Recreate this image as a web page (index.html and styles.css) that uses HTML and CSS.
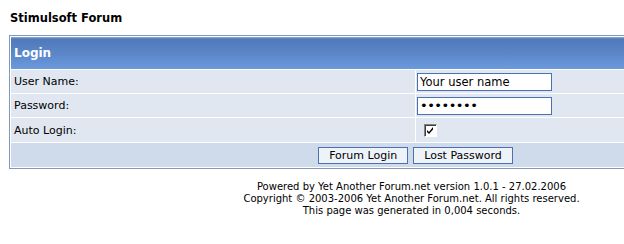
FILE: index.html
```html
<!DOCTYPE html>
<html lang="en">
  <head>
    <meta charset="UTF-8" />
    <title>Stimulsoft Forum - Login</title>
    <link rel="stylesheet" href="styles.css">
  </head>
  <body>
    <div class="page">
      <h1 class="forum-title">Stimulsoft Forum</h1>

      <form class="login-box">
        <div class="login-header">Login</div>

        <div class="cell label">User Name:</div>
        <div class="cell field">
          <input type="text" class="textbox" value="Your user name" />
        </div>

        <div class="cell label">Password:</div>
        <div class="cell field">
          <input type="password" class="textbox pass" value="password" />
        </div>

        <div class="cell label tall">Auto Login:</div>
        <div class="cell field tall">
          <span class="checkbox">
            <svg width="9" height="9" viewBox="0 0 9 9">
              <path d="M1 4 L3 6 L7 1 L7 3.5 L3 8 L1 6 Z" fill="#000" />
            </svg>
          </span>
        </div>

        <div class="login-footer">
          <button type="button" class="btn">Forum Login</button>
          <button type="button" class="btn">Lost Password</button>
        </div>
      </form>

      <div class="copyright">
        Powered by <a href="#">Yet Another Forum.net</a> version 1.0.1 - 27.02.2006<br />
        Copyright &copy; 2003-2006 Yet Another Forum.net. All rights reserved.<br />
        This page was generated in 0,004 seconds.
      </div>
    </div>
  </body>
</html>
```

FILE: styles.css
```css
html,
body {
  margin: 0;
  padding: 0;
  overflow: hidden;
  background: #fff;
}
body {
  font-family: "DejaVu Sans", Verdana, sans-serif;
  font-size: 11px;
  color: #000;
}
.page {
  width: 813px;
  padding: 10px 0 0 9px;
}
.forum-title {
  margin: 0 0 9px 1px;
  font-size: 11.5px;
  font-weight: bold;
  line-height: 16px;
}

/* login table */
.login-box {
  display: grid;
  grid-template-columns: 1fr 1fr;
  gap: 1px;
  padding: 1px;
  margin: 0;
  border: 1px solid #8397b6;
  background: #fff;
}
.login-header {
  grid-column: 1 / 3;
  height: 32px;
  display: flex;
  align-items: center;
  padding-left: 3px;
  color: #fff;
  font-weight: bold;
  font-size: 12px;
  background: linear-gradient(#8aaee0 0, #5079b9 2px, #5a86c8 50%, #6b9adc 100%);
}
.cell {
  height: 23px;
  display: flex;
  align-items: center;
  background: #e0e7f0;
}
.cell.tall {
  height: 24px;
}
.label {
  padding-left: 3px;
}
.field {
  padding-left: 1px;
}
.textbox {
  width: 135px;
  height: 18px;
  box-sizing: border-box;
  margin: 0;
  padding: 0 2px;
  border: 1px solid #4a72b3;
  background: #fff;
  font-family: "DejaVu Sans", Verdana, sans-serif;
  font-size: 11.5px;
  color: #000;
  outline: none;
}
.textbox.pass {
  font-size: 13px;
  letter-spacing: -0.5px;
}
.checkbox {
  display: flex;
  align-items: center;
  justify-content: center;
  width: 11px;
  height: 11px;
  margin-left: 7px;
  border: 1px solid;
  border-color: #808080 #fff #fff #808080;
  box-shadow: inset 1px 1px 0 #404040;
  background: #fff;
}
.login-footer {
  grid-column: 1 / 3;
  height: 24px;
  display: flex;
  align-items: center;
  justify-content: center;
  gap: 5px;
  background: #cfdbea;
}
.btn {
  height: 17px;
  margin: 0;
  padding: 0 10px;
  border: 1px solid #4a72b3;
  background: #eef3fa;
  font-family: "DejaVu Sans", Verdana, sans-serif;
  font-size: 11px;
  color: #000;
}

/* footer */
.copyright {
  margin-top: 12px;
  padding-right: 8px;
  text-align: center;
  font-size: 10px;
  line-height: 12px;
}
.copyright a {
  color: #000;
  text-decoration: none;
}
```
